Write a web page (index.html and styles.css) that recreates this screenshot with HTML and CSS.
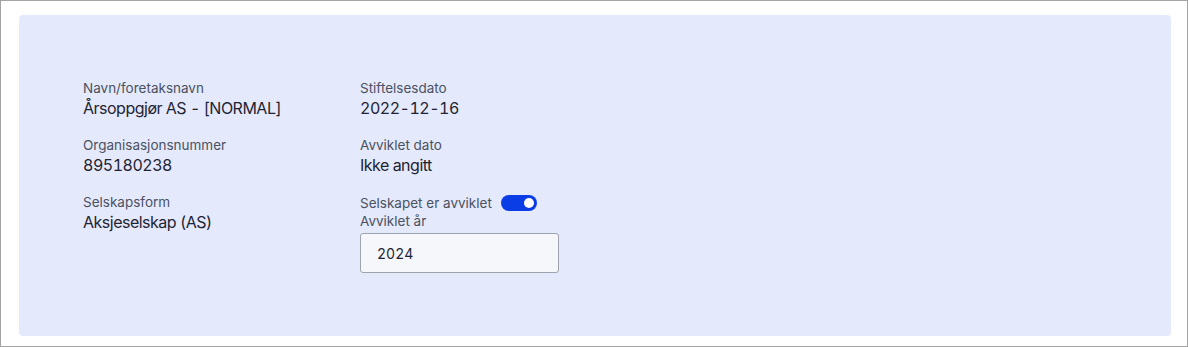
FILE: index.html
```html
<!DOCTYPE html>
<html lang="no">
<head>
<meta charset="utf-8">
<link rel="stylesheet" href="styles.css">
</head>
<body>
<div class="frame">
  <section class="panel">
    <div class="grid">
      <div class="col">
        <div class="field">
          <div class="label">Navn/foretaksnavn</div>
          <div class="value">Årsoppgjør AS - [NORMAL]</div>
        </div>
        <div class="field">
          <div class="label">Organisasjonsnummer</div>
          <div class="value">895180238</div>
        </div>
        <div class="field">
          <div class="label">Selskapsform</div>
          <div class="value">Aksjeselskap (AS)</div>
        </div>
      </div>
      <div class="col">
        <div class="field">
          <div class="label">Stiftelsesdato</div>
          <div class="value">2022-12-16</div>
        </div>
        <div class="field">
          <div class="label">Avviklet dato</div>
          <div class="value">Ikke angitt</div>
        </div>
        <div class="field">
          <div class="toggle-row">
            <span class="label">Selskapet er avviklet</span>
            <span class="toggle"><span class="knob"></span></span>
          </div>
          <div class="label">Avviklet år</div>
          <div class="input">2024</div>
        </div>
      </div>
    </div>
  </section>
</div>
</body>
</html>
```

FILE: styles.css
```css
html, body {
  margin: 0;
  padding: 0;
  background: #ffffff;
}
body {
  font-family: Inter, "Noto Sans", "Liberation Sans", sans-serif;
}
.frame {
  box-sizing: border-box;
  width: 1188px;
  height: 347px;
  border: 1px solid #a3a3a3;
  padding: 14px 16px 0 18px;
}
.panel {
  box-sizing: border-box;
  height: 321px;
  background: #e4e9fc;
  border-radius: 4px;
  padding: 64px 0 0 64px;
}
.grid {
  display: flex;
}
.col {
  display: flex;
  flex-direction: column;
  gap: 17px;
}
.col:first-child {
  width: 277px;
}
.field {
  display: flex;
  flex-direction: column;
}
.label {
  font-size: 13.5px;
  line-height: 18px;
  color: #4b5162;
}
.value {
  font-size: 16px;
  line-height: 22px;
  color: #1f2433;
  font-variant-numeric: tabular-nums;
  letter-spacing: -0.5px;
}
.toggle-row {
  display: flex;
  align-items: center;
  gap: 9px;
  height: 19px;
}
.toggle {
  width: 36px;
  height: 16px;
  border-radius: 8px;
  background: #0b3de6;
  display: flex;
  align-items: center;
  justify-content: flex-end;
  padding-right: 3px;
  box-sizing: border-box;
}
.knob {
  width: 10px;
  height: 10px;
  border-radius: 50%;
  background: #ffffff;
}
.input {
  box-sizing: border-box;
  margin-top: 3px;
  width: 199px;
  height: 40px;
  border: 1px solid #9fa3ad;
  border-radius: 3px;
  background: #f5f7fb;
  padding: 0 16px;
  display: flex;
  align-items: center;
  font-size: 14px;
  color: #1f2433;
  font-variant-numeric: tabular-nums;
}
```
